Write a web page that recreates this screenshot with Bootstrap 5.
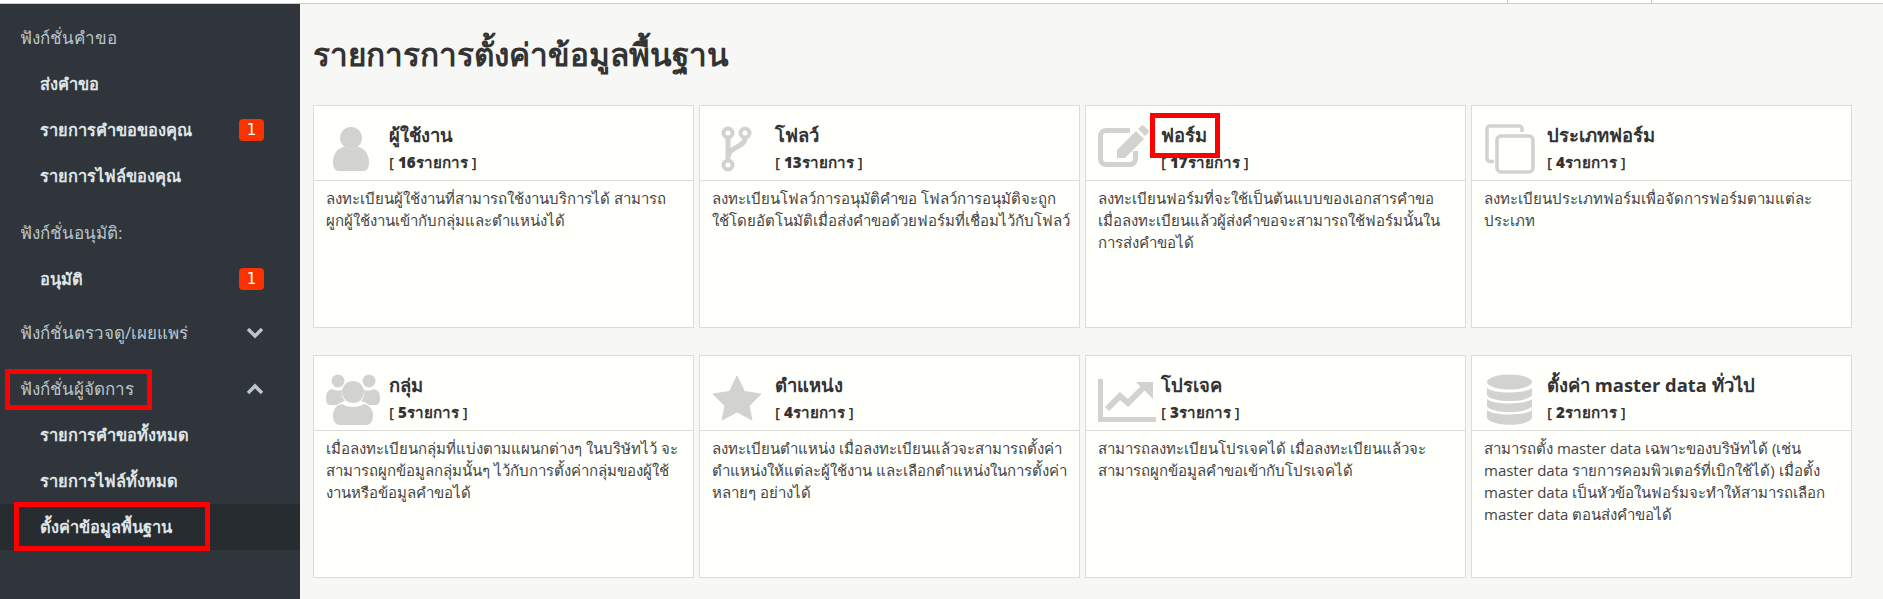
<!DOCTYPE html>
<html lang="th"><head><meta charset="utf-8"><title>รายการการตั้งค่าข้อมูลพื้นฐาน</title>
<link href="https://cdn.jsdelivr.net/npm/bootstrap@5.3.0/dist/css/bootstrap.min.css" rel="stylesheet">
<style>
html,body{height:100%;overflow:hidden}
body{font-family:"Open Sans","Noto Sans",sans-serif;background:#f7f8f5;color:#333;font-size:14px}
.topstrip{height:4px;border-bottom:1px solid #ccc;background:#fff}
.topstrip span{display:block;height:3px;border-left:1px solid #ccc}
.tb-a{width:144px}.tb-b{width:232px}
.shell{height:595px}
.sidenav{width:300px;background:#2f353a;flex:none;padding-top:11px}
.sec{height:46px;padding:0 36px 0 20px;color:#b8c7ce;font-size:17px;position:relative}
.itm{height:46px;padding:0 36px 0 40px;color:#dfe5e8;font-size:16.4px;font-weight:600;position:relative}
.itm.cur{background:#272c30}
.sp-a{margin-top:11px}.sp-b{margin-top:8px}.sp-c{margin-top:10px}
.num{width:25px;height:22px;background:#f83200;color:#fff;border-radius:4px;font-size:15px;font-weight:400;font-family:"DejaVu Sans",sans-serif}
.redbox{position:absolute;border:5px solid #f00;pointer-events:none}
.pagebody{padding:0 13px}
.pagetitle{font-size:31.5px;font-weight:700;color:#333;margin:0;height:101px;padding-top:31px}
.tiles{display:grid;grid-template-columns:repeat(4,381px);gap:27px 5px}
.tile{background:#fffffc;border:1px solid #dcddd9;height:223px}
.tile-head{height:75px;border-bottom:1px solid #dcddd9;padding:0 0 0 13px}
.tile-ic{width:62px;flex:none;height:50px}
.tile-txt{padding-top:10px}
.tile-name{font-size:18.4px;font-weight:700;color:#333;margin:0;line-height:24px;position:relative}
.tile-count{font-size:15.2px;font-weight:600;color:#333;line-height:24px;margin-top:3px}
.tile-text{padding:6px 8px 6px 12px;font-size:15px;line-height:22px;color:#444;margin:0}
svg{fill:#d2d3cf;display:block;overflow:visible}
.ln{fill:none;stroke:#d2d3cf}
</style></head><body>
<div class="topstrip d-flex justify-content-end"><span class="tb-a"></span><span class="tb-b"></span></div>
<div class="shell d-flex">
<nav class="sidenav">
<div class="sec d-flex align-items-center">ฟังก์ชั่นคำขอ</div>
<div class="itm d-flex align-items-center">ส่งคำขอ</div>
<div class="itm d-flex align-items-center justify-content-between">รายการคำขอของคุณ<span class="num d-flex align-items-center justify-content-center">1</span></div>
<div class="itm d-flex align-items-center">รายการไฟล์ของคุณ</div>
<div class="sec d-flex align-items-center sp-a">ฟังก์ชั่นอนุมัติ:</div>
<div class="itm d-flex align-items-center justify-content-between">อนุมัติ<span class="num d-flex align-items-center justify-content-center">1</span></div>
<div class="sec d-flex align-items-center justify-content-between sp-b">ฟังก์ชั่นตรวจดู/เผยแพร่<svg width="18" height="12" viewBox="0 0 18 12"><path d="M2 2l7 7 7-7" fill="none" stroke="#b8c7ce" stroke-width="3.4"/></svg></div>
<div class="sec d-flex align-items-center justify-content-between sp-c">ฟังก์ชั่นผู้จัดการ<svg width="18" height="12" viewBox="0 0 18 12"><path d="M2 10l7-7 7 7" fill="none" stroke="#b8c7ce" stroke-width="3.4"/></svg><i class="redbox" style="left:5px;top:3px;width:147px;height:41px"></i></div>
<div class="itm d-flex align-items-center">รายการคำขอทั้งหมด</div>
<div class="itm d-flex align-items-center">รายการไฟล์ทั้งหมด</div>
<div class="itm cur d-flex align-items-center">ตั้งค่าข้อมูลพื้นฐาน<i class="redbox" style="left:14px;top:-2px;width:196px;height:49px"></i></div>
</nav>
<main class="pagebody flex-grow-1">
<h1 class="pagetitle">รายการการตั้งค่าข้อมูลพื้นฐาน</h1>
<div class="tiles">
<section class="tile"><div class="tile-head d-flex align-items-center"><div class="tile-ic"><svg width="50" height="50" viewBox="0 0 50 50"><circle cx="24" cy="20" r="11"/><path d="M6 44c0-8 5-15 12-15 3 3 9 3 12 0 7 0 12 7 12 15 0 6-2 9-6 9H12c-4 0-6-3-6-9z"/></svg></div><div class="tile-txt"><p class="tile-name">ผู้ใช้งาน</p><div class="tile-count">[ <b>16</b>รายการ ]</div></div></div><p class="tile-text">ลงทะเบียนผู้ใช้งานที่สามารถใช้งานบริการได้ สามารถ<br>ผูกผู้ใช้งานเข้ากับกลุ่มและตำแหน่งได้</p></section>
<section class="tile"><div class="tile-head d-flex align-items-center"><div class="tile-ic"><svg width="50" height="50" viewBox="0 0 50 50"><g class="ln" stroke-width="4"><circle cx="15" cy="15" r="4.5"/><circle cx="32" cy="15" r="4.5"/><circle cx="15" cy="47" r="4.5"/></g><path class="ln" stroke-width="5" d="M15 20v22M32 20c0 10-17 8-17 20"/></svg></div><div class="tile-txt"><p class="tile-name">โฟลว์</p><div class="tile-count">[ <b>13</b>รายการ ]</div></div></div><p class="tile-text">ลงทะเบียนโฟลว์การอนุมัติคำขอ โฟลว์การอนุมัติจะถูกใช้โดยอัตโนมัติเมื่อส่งคำขอด้วยฟอร์มที่เชื่อมไว้กับโฟลว์</p></section>
<section class="tile"><div class="tile-head d-flex align-items-center"><div class="tile-ic"><svg width="50" height="50" viewBox="0 0 50 50"><path class="ln" stroke-width="5" d="M31 12.500H7a5.500 5.500 0 0 0-5.500 5.500v23a5.500 5.500 0 0 0 5.500 5.500h24a5.500 5.500 0 0 0 5.500-5.500v-8"/><path d="M18 40v-8l19-19 8 8-19 19zM39 11l3-3c1-1 2-1 3 0l4 4c1 1 1 2 0 3l-3 3z"/></svg></div><div class="tile-txt"><p class="tile-name">ฟอร์ม<i class="redbox" style="left:-11px;top:-10px;width:70px;height:45px"></i></p><div class="tile-count">[ <b>17</b>รายการ ]</div></div></div><p class="tile-text">ลงทะเบียนฟอร์มที่จะใช้เป็นต้นแบบของเอกสารคำขอ เมื่อลงทะเบียนแล้วผู้ส่งคำขอจะสามารถใช้ฟอร์มนั้นในการส่งคำขอได้</p></section>
<section class="tile"><div class="tile-head d-flex align-items-center"><div class="tile-ic"><svg width="50" height="50" viewBox="0 0 50 50"><path class="ln" stroke-width="3.600" d="M9 43.500H5a3 3 0 0 1-3-3V11a3 3 0 0 1 3-3h29a3 3 0 0 1 3 3v3"/><rect class="ln" stroke-width="3.600" x="12" y="18" width="36" height="36" rx="4"/></svg></div><div class="tile-txt"><p class="tile-name">ประเภทฟอร์ม</p><div class="tile-count">[ <b>4</b>รายการ ]</div></div></div><p class="tile-text">ลงทะเบียนประเภทฟอร์มเพื่อจัดการฟอร์มตามแต่ละประเภท</p></section>
<section class="tile"><div class="tile-head d-flex align-items-center"><div class="tile-ic"><svg width="50" height="50" viewBox="0 0 50 50"><circle cx="11" cy="13" r="6.500"/><circle cx="42" cy="13" r="6.500"/><circle cx="26" cy="24" r="11"/><path d="M-1 30c0-5 2-8 6-9 3 2 8 2 10 1-1 4 0 8 3 11-3 1-6 2-8 4H3c-3 0-4-3-4-7zM53 30c0-5-2-8-6-9-3 2-8 2-10 1 1 4 0 8-3 11 3 1 6 2 8 4h7c3 0 4-3 4-7zM6 47c0-6 4-10 9-11 5 4 17 4 22 0 5 1 9 5 9 11 0 7-3 10-7 10H13c-4 0-7-3-7-10z"/></svg></div><div class="tile-txt"><p class="tile-name">กลุ่ม</p><div class="tile-count">[ <b>5</b>รายการ ]</div></div></div><p class="tile-text">เมื่อลงทะเบียนกลุ่มที่แบ่งตามแผนกต่างๆ ในบริษัทไว้ จะสามารถผูกข้อมูลกลุ่มนั้นๆ ไว้กับการตั้งค่ากลุ่มของผู้ใช้งานหรือข้อมูลคำขอได้</p></section>
<section class="tile"><div class="tile-head d-flex align-items-center"><div class="tile-ic"><svg width="50" height="50" viewBox="0 0 50 50"><path d="M24 8l7.500 15.500 16.500 2.500-12 12 3 14-15-8-15 8 3-14-12-12 16.500-2.500z" stroke="#d2d3cf" stroke-linejoin="round"/></svg></div><div class="tile-txt"><p class="tile-name">ตำแหน่ง</p><div class="tile-count">[ <b>4</b>รายการ ]</div></div></div><p class="tile-text">ลงทะเบียนตำแหน่ง เมื่อลงทะเบียนแล้วจะสามารถตั้งค่าตำแหน่งให้แต่ละผู้ใช้งาน และเลือกตำแหน่งในการตั้งค่าหลายๆ อย่างได้</p></section>
<section class="tile"><div class="tile-head d-flex align-items-center"><div class="tile-ic"><svg width="50" height="50" viewBox="0 0 50 50"><path d="M-1 11h5v38h53v5H-1z"/><path class="ln" stroke-width="6" d="M8 41l13-13 8 7 18-18"/><path d="M37 14h17v17z"/></svg></div><div class="tile-txt"><p class="tile-name">โปรเจค</p><div class="tile-count">[ <b>3</b>รายการ ]</div></div></div><p class="tile-text">สามารถลงทะเบียนโปรเจคได้ เมื่อลงทะเบียนแล้วจะสามารถผูกข้อมูลคำขอเข้ากับโปรเจคได้</p></section>
<section class="tile"><div class="tile-head d-flex align-items-center"><div class="tile-ic"><svg width="50" height="50" viewBox="0 0 50 50"><ellipse cx="24.500" cy="14" rx="22.500" ry="7.500"/><path d="M2 20c6 6 39 6 45 0v7c-4 8-41 8-45 0zM2 31c6 6 39 6 45 0v7c-4 8-41 8-45 0zM2 42c6 6 39 6 45 0v8c-4 9-41 9-45 0z"/></svg></div><div class="tile-txt"><p class="tile-name">ตั้งค่า master data ทั่วไป</p><div class="tile-count">[ <b>2</b>รายการ ]</div></div></div><p class="tile-text">สามารถตั้ง master data เฉพาะของบริษัทได้ (เช่น master data รายการคอมพิวเตอร์ที่เบิกใช้ได้) เมื่อตั้ง master data เป็นหัวข้อในฟอร์มจะทำให้สามารถเลือก master data ตอนส่งคำขอได้</p></section>
</div>
</main>
</div>
</body></html>
